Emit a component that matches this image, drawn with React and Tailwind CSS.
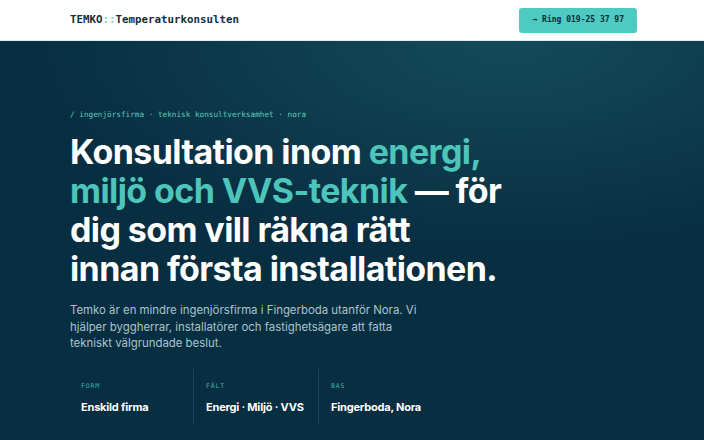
export default function App() {
  const mono = { fontFamily: '"DejaVu Sans Mono", "Liberation Mono", monospace' };
  const sans = { fontFamily: 'Inter, "Noto Sans", sans-serif' };

  const facts = [
    { label: "FORM", value: "Enskild firma" },
    { label: "FÄLT", value: "Energi · Miljö · VVS" },
    { label: "BAS", value: "Fingerboda, Nora" },
  ];

  return (
    <div className="flex h-[440px] flex-col overflow-hidden bg-[#082e42]" style={sans}>
      {/* top bar */}
      <header className="flex h-[41px] shrink-0 items-center justify-between border-b border-[#e3ecef] bg-white px-[70px]">
        <div className="text-[10.8px] font-semibold text-[#12303c]" style={mono}>
          TEMKO<span className="text-[#7fd3cb]">::</span>Temperaturkonsulten
        </div>
        <a
          href="#"
          className="mr-[-3px] flex h-[25px] items-center rounded-[3px] bg-[#4ecac0] px-[13px] text-[8px] font-semibold text-[#0d2b36]"
          style={mono}
        >
          → Ring 019-25 37 97
        </a>
      </header>

      {/* hero */}
      <section className="flex-1 bg-[radial-gradient(ellipse_90%_70%_at_72%_0%,rgba(24,88,98,0.7),rgba(8,46,66,0)_75%)] px-[70px] pt-[69px]">
        <p className="text-[7.7px] leading-[10px] text-[#5ccabf]" style={mono}>
          / ingenjörsfirma · teknisk konsultverksamhet · nora
        </p>
        <h1 className="mt-[12px] text-[34px] font-bold leading-[39px] tracking-[-0.6px] text-white">
          Konsultation inom <span className="text-[#4ec5ba]">energi,</span>
          <br />
          <span className="text-[#4ec5ba]">miljö och VVS-teknik</span> — för
          <br />
          dig som vill räkna rätt
          <br />
          innan första installationen.
        </h1>
        <p className="mt-[14px] whitespace-nowrap text-[11.4px] leading-[16.5px] text-[#aac4cd]">
          Temko är en mindre ingenjörsfirma i Fingerboda utanför Nora. Vi
          <br />
          hjälper byggherrar, installatörer och fastighetsägare att fatta
          <br />
          tekniskt välgrundade beslut.
        </p>
        <div className="mt-[17px] flex h-[55px]">
          {facts.map((f, i) => (
            <div
              key={f.label}
              className={
                i === 0
                  ? "w-[123px] pl-[11px] pt-[13px]"
                  : "w-[125px] border-l border-[#1d4558] pl-[12px] pt-[13px]"
              }
            >
              <div className="text-[6.5px] tracking-[0.8px] text-[#3eb4aa]" style={mono}>
                {f.label}
              </div>
              <div className="mt-[8px] text-[11px] font-bold tracking-[-0.2px] text-white">{f.value}</div>
            </div>
          ))}
        </div>
      </section>
    </div>
  );
}
